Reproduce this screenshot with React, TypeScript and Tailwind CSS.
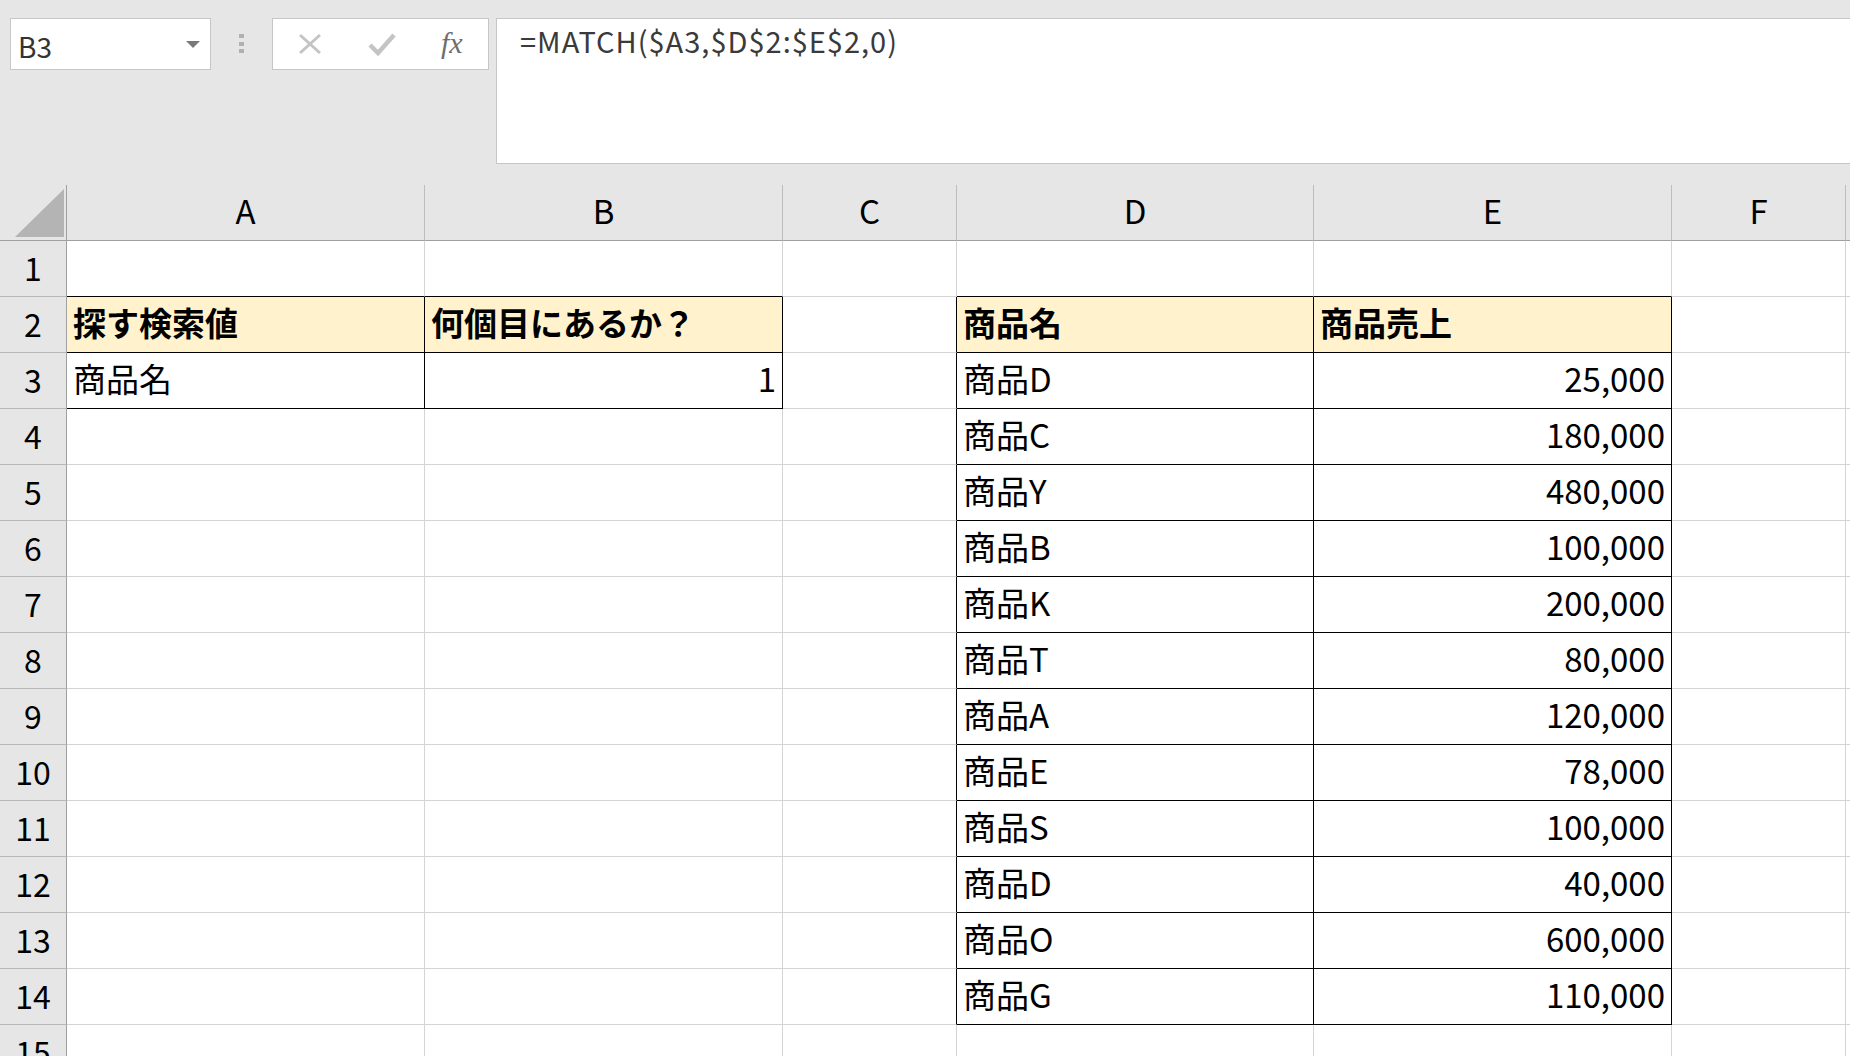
import React from 'react';

interface CellData {
  text: string;
  bold?: boolean;
  right?: boolean;
  fill?: boolean;
}

const COLS = ['A', 'B', 'C', 'D', 'E', 'F', 'G'];
const ROWS = Array.from({ length: 15 }, (_, i) => i + 1);

const products: [string, string][] = [
  ['商品D', '25,000'],
  ['商品C', '180,000'],
  ['商品Y', '480,000'],
  ['商品B', '100,000'],
  ['商品K', '200,000'],
  ['商品T', '80,000'],
  ['商品A', '120,000'],
  ['商品E', '78,000'],
  ['商品S', '100,000'],
  ['商品D', '40,000'],
  ['商品O', '600,000'],
  ['商品G', '110,000'],
];

const cells: Record<string, CellData> = {
  A2: { text: '探す検索値', bold: true, fill: true },
  B2: { text: '何個目にあるか？', bold: true, fill: true },
  A3: { text: '商品名' },
  B3: { text: '1', right: true },
  D2: { text: '商品名', bold: true, fill: true },
  E2: { text: '商品売上', bold: true, fill: true },
};
products.forEach(([name, sales], i) => {
  cells[`D${i + 3}`] = { text: name };
  cells[`E${i + 3}`] = { text: sales, right: true };
});

// bordered ranges: A2:B3 and D2:E14
const inTable = (r: number, c: number) =>
  (r >= 2 && r <= 3 && c >= 0 && c <= 1) || (r >= 2 && r <= 14 && c >= 3 && c <= 4);

const font = { fontFamily: '"Noto Sans CJK JP", "Noto Sans", sans-serif' };

const Toolbar: React.FC = () => (
  <div className="h-[185px] bg-[#e6e6e6] flex items-start pt-[18px] pl-[10px]">
    {/* Name box */}
    <div className="w-[201px] h-[52px] bg-white border border-[#c6c6c6] flex items-center justify-between pl-[7px] pr-[10px]">
      <span className="text-[28px] leading-none text-[#333333] mt-[4px]">B3</span>
      <svg width="14" height="7" viewBox="0 0 14 7">
        <polygon points="0,0 14,0 7,7" fill="#7a7a7a" />
      </svg>
    </div>

    {/* grip dots */}
    <div className="w-[61px] h-[52px] flex flex-col items-center pt-[16px] gap-[3.5px]">
      <div className="w-[5px] h-[4px] bg-[#b0b0b0]" />
      <div className="w-[5px] h-[4px] bg-[#b0b0b0]" />
      <div className="w-[5px] h-[4px] bg-[#b0b0b0]" />
    </div>

    {/* cancel / enter / fx */}
    <div className="w-[217px] h-[52px] bg-white border border-[#c6c6c6] flex items-center pl-[25px]">
      <svg width="24" height="22" viewBox="0 0 24 22">
        <path d="M2 2 L22 20 M22 2 L2 20" stroke="#c4c4c4" strokeWidth="3" fill="none" />
      </svg>
      <svg className="ml-[46px]" width="28" height="24" viewBox="0 0 28 24">
        <path d="M2 13 L10 21 L26 3" stroke="#c4c4c4" strokeWidth="4.5" fill="none" strokeLinejoin="miter" />
      </svg>
      <span
        className="ml-[45px] text-[30px] leading-none italic text-[#6e6e6e] -mt-[2px]"
        style={{ fontFamily: '"Liberation Serif", "DejaVu Serif", serif' }}
      >
        fx
      </span>
    </div>

    {/* formula bar */}
    <div className="ml-[7px] flex-1 h-[146px] bg-white border border-[#c6c6c6] border-r-0 pl-[23px] pt-[7px]">
      <span className="text-[29px] leading-none tracking-[1px] text-[#3a3a3a]">=MATCH($A3,$D$2:$E$2,0)</span>
    </div>
  </div>
);

const Sheet: React.FC = () => (
  <div className="grid grid-cols-[67px_358px_358px_174px_357px_358px_174px_1fr] auto-rows-[56px]">
    {/* corner */}
    <div className="bg-[#e6e6e6] border-r border-b border-r-[#a0a0a0] border-b-[#a0a0a0] flex items-end justify-end pr-[2px] pb-[3px]">
      <svg width="49" height="48" viewBox="0 0 49 48">
        <polygon points="0,48 49,48 49,0" fill="#b4b4b4" />
      </svg>
    </div>
    {COLS.map((c) => (
      <div
        key={c}
        className="bg-[#e6e6e6] border-r border-b border-r-[#bdbdbd] border-b-[#a0a0a0] flex items-center justify-center pb-[4px] text-[33px] leading-none text-black"
      >
        {c === 'G' ? '' : c}
      </div>
    ))}

    {ROWS.map((r) => (
      <React.Fragment key={r}>
        <div className="bg-[#e6e6e6] border-r border-b border-r-[#a0a0a0] border-b-[#b8b8b8] flex items-center justify-center pb-[4px] text-[32px] leading-none text-black">
          {r}
        </div>
        {COLS.map((c, ci) => {
          const data = cells[`${c}${r}`];
          const rightBlack = inTable(r, ci) || inTable(r, ci + 1);
          const bottomBlack = inTable(r, ci) || inTable(r + 1, ci);
          return (
            <div
              key={c}
              className={`flex items-center px-[6px] pb-[4px] overflow-hidden whitespace-nowrap text-[33px] leading-none text-black border-r border-b ${
                rightBlack ? 'border-r-black' : 'border-r-[#d4d4d4]'
              } ${bottomBlack ? 'border-b-black' : 'border-b-[#d4d4d4]'} ${
                data?.fill ? 'bg-[#fff2cc]' : 'bg-white'
              } ${data?.right ? 'justify-end' : 'justify-start'} ${data?.bold ? 'font-bold' : 'font-normal'}`}
            >
              {data?.text}
            </div>
          );
        })}
      </React.Fragment>
    ))}
  </div>
);

const App: React.FC = () => (
  <div className="w-[1850px] h-[1056px] overflow-hidden bg-white" style={font}>
    <Toolbar />
    <Sheet />
  </div>
);

export default App;
